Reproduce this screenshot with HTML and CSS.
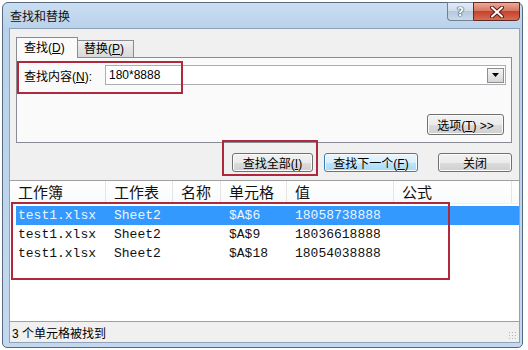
FILE: index.html
```html
<!DOCTYPE html>
<html>

<head>
    <title>查找和替换</title>
    <link rel="stylesheet" href="styles.css">
</head>

<body>
    <div class="window">
        <div class="titlebar">
            <span class="title">查找和替换</span>
            <div class="caption">
                <span class="cap-btn help">?</span>
                <span class="cap-btn close">
                    <svg width="16" height="12" viewBox="0 0 16 12">
                        <path d="M3 1.5 L13 10.5 M13 1.5 L3 10.5" stroke="#5a1a14" stroke-width="4" stroke-linecap="round" />
                        <path d="M3 1.5 L13 10.5 M13 1.5 L3 10.5" stroke="#fff" stroke-width="2" stroke-linecap="round" />
                    </svg>
                </span>
            </div>
        </div>

        <div class="client">
            <div class="upper">
                <div class="tabs">
                    <span class="tab active">查找(<u>D</u>)</span>
                    <span class="tab">替换(<u>P</u>)</span>
                </div>
                <div class="panel">
                    <div class="find-row">
                        <label class="find-label">查找内容(<u>N</u>):</label>
                        <div class="combo">
                            <span class="combo-text">180*8888</span>
                            <span class="combo-btn">
                                <svg width="7" height="4" viewBox="0 0 7 4"><path d="M0 0 H7 L3.5 4 Z" fill="#000" /></svg>
                            </span>
                        </div>
                    </div>
                    <div class="options-row">
                        <button class="btn btn-options">选项(<u>T</u>) &gt;&gt;</button>
                    </div>
                </div>
                <div class="actions">
                    <button class="btn btn-all">查找全部(<u>I</u>)</button>
                    <button class="btn btn-next">查找下一个(<u>F</u>)</button>
                    <button class="btn btn-close">关闭</button>
                </div>
            </div>

            <div class="results">
                <div class="list-head">
                    <span>工作簿</span>
                    <span>工作表</span>
                    <span>名称</span>
                    <span>单元格</span>
                    <span>值</span>
                    <span>公式</span>
                    <span></span>
                </div>
                <div class="list-body">
                    <div class="row selected">
                        <span>test1.xlsx</span><span>Sheet2</span><span></span><span>$A$6</span><span>18058738888</span><span></span>
                    </div>
                    <div class="row">
                        <span>test1.xlsx</span><span>Sheet2</span><span></span><span>$A$9</span><span>18036618888</span><span></span>
                    </div>
                    <div class="row">
                        <span>test1.xlsx</span><span>Sheet2</span><span></span><span>$A$18</span><span>18054038888</span><span></span>
                    </div>
                </div>
            </div>

            <div class="status">
                <span>3 个单元格被找到</span>
                <span class="grip"></span>
            </div>
        </div>

        <!-- red annotation boxes drawn over the dialog -->
        <div class="mark mark-find"></div>
        <div class="mark mark-all"></div>
        <div class="mark mark-rows"></div>
    </div>
</body>

</html>
```

FILE: styles.css
```css
body {
    margin: 0;
    background: #fff;
    font-family: "Liberation Sans", "Noto Sans CJK SC", sans-serif;
    font-size: 12px;
    color: #000;
}

.window {
    position: relative;
    box-sizing: border-box;
    width: 521px;
    height: 346px;
    margin: 2px 0 0 2px;
    padding: 0 2px 4px 6px;
    border: 1px solid #56697f;
    border-radius: 6px 6px 5px 5px;
    background: linear-gradient(#cadef2, #b9d1ea 26px, #bed5ed 60%, #c4d9ef);
    display: flex;
    flex-direction: column;
}

/* title bar */

.titlebar {
    height: 25px;
    flex: none;
    display: flex;
    justify-content: space-between;
    align-items: flex-start;
}

.title {
    padding-left: 1px;
    line-height: 26px;
    font-family: "Noto Sans CJK SC", sans-serif;
    color: #111;
}

.caption {
    display: flex;
    margin-top: -1px;
}

.cap-btn {
    box-sizing: border-box;
    height: 19px;
    display: flex;
    align-items: center;
    justify-content: center;
}

.help {
    width: 26px;
    border: 1px solid #6f8197;
    border-right: none;
    border-radius: 0 0 0 4px;
    background: linear-gradient(#e4ecf5, #cfdcea 45%, #b6c8dc 50%, #cbdaea);
    color: #fff;
    font-family: "DejaVu Sans", sans-serif;
    font-weight: bold;
    font-size: 13px;
    text-shadow: 0 0 1px #2c3e55, 0 0 1px #2c3e55, 0 0 1px #2c3e55;
}

.close {
    width: 47px;
    border: 1px solid #5f2a24;
    border-radius: 0 0 4px 0;
    background: linear-gradient(#eba898, #d87862 45%, #c4432d 50%, #d86c52);
}

/* client area */

.client {
    flex: 1;
    display: flex;
    flex-direction: column;
    border: 1px solid #8ea2b8;
    background: #f0f0f0;
}

.upper {
    padding: 8px 7px 0 6px;
}

.tabs {
    display: flex;
    align-items: flex-end;
    height: 20px;
}

.tab {
    box-sizing: border-box;
    height: 17px;
    padding-left: 6px;
    border: 1px solid #898c95;
    border-bottom: none;
    background: linear-gradient(#f3f3f3, #e3e3e3 50%, #d9d9d9);
    line-height: 16px;
    width: 57px;
    margin-left: -1px;
}

.tab.active {
    position: relative;
    z-index: 1;
    width: 62px;
    height: 21px;
    margin: 0 0 -1px 0;
    padding-left: 7px;
    background: #fafafa;
    line-height: 20px;
}

.panel {
    border: 1px solid #898c95;
    background: #fafafa;
    padding: 7px 5px 7px 7px;
}

.find-row {
    display: flex;
    align-items: center;
}

.find-label {
    flex: 0 0 81px;
}

.combo {
    flex: 1;
    box-sizing: border-box;
    height: 20px;
    display: flex;
    align-items: center;
    justify-content: space-between;
    border: 1px solid #abadb3;
    background: #fff;
}

.combo-text {
    padding-left: 3px;
}

.combo-btn {
    box-sizing: border-box;
    width: 17px;
    height: 15px;
    margin-right: 1px;
    display: flex;
    align-items: center;
    justify-content: center;
    border: 1px solid #8d8e90;
    background: linear-gradient(#f4f4f4, #e6e6e6 50%, #d6d6d6);
}

.options-row {
    display: flex;
    justify-content: flex-end;
    margin-top: 29px;
    padding-right: 2px;
}

.btn {
    box-sizing: border-box;
    padding: 0;
    border: 1px solid #707070;
    border-radius: 3px;
    background: linear-gradient(#f2f2f2, #ebebeb 50%, #dddddd 50%, #cfcfcf);
    box-shadow: inset 0 0 0 1px #fbfbfb;
    font-family: "Liberation Sans", "Noto Sans CJK SC", sans-serif;
    font-size: 12px;
    color: #000;
}

.btn-options {
    width: 77px;
    height: 21px;
}

.actions {
    display: flex;
    justify-content: flex-end;
    margin-top: 10px;
}

.actions .btn {
    height: 19px;
}

.btn-all {
    width: 81px;
}

.btn-next {
    width: 94px;
    margin-left: 11px;
    border-color: #3c7fb1;
    background: linear-gradient(#eaf6fd, #d9f0fc 50%, #bee6fd 50%, #a7d9f5);
}

.btn-close {
    width: 74px;
    margin-left: 20px;
}

/* results list */

.results {
    flex: 1;
    margin-top: 8px;
    border-top: 1px solid #a0a0a0;
    background: #fff;
}

.list-head,
.row {
    display: grid;
    grid-template-columns: 96px 67px 48px 66px 107px 118px 1fr;
}

.list-head {
    height: 22px;
    background: linear-gradient(#fff, #f9fafb);
    border-bottom: 1px solid #f0f0f0;
    font-family: "Noto Sans CJK SC", sans-serif;
    font-size: 15px;
    line-height: 21px;
    color: #111;
}

.list-head span {
    padding-left: 8px;
    border-right: 1px solid #e5e5e5;
}

.list-head span:last-child {
    border-right: none;
}

.list-body {
    padding-top: 2px;
}

.row {
    grid-template-columns: 90px 67px 48px 66px 107px 1fr;
    height: 19px;
    margin-left: 6px;
    font-family: "Liberation Mono", monospace;
    font-size: 13px;
    line-height: 19px;
    color: #111;
}

.row span {
    padding-left: 8px;
    white-space: nowrap;
}

.row span:first-child {
    padding-left: 2px;
}

.row.selected {
    background: #3399ff;
    color: #eaf5ff;
}

/* status bar */

.status {
    height: 20px;
    display: flex;
    align-items: center;
    justify-content: space-between;
    border-top: 1px solid #a0a0a0;
    padding-left: 2px;
}

.grip {
    width: 10px;
    height: 10px;
    align-self: flex-end;
    margin: 0 1px 1px 0;
    background: radial-gradient(circle, #b8b8b8 0.8px, transparent 1px) 0 0 / 3px 3px;
}

/* annotations */

.mark {
    position: absolute;
    box-sizing: border-box;
    border: 2px solid #b0283c;
}

.mark-find {
    left: 14px;
    top: 58px;
    width: 166px;
    height: 33px;
}

.mark-all {
    left: 219px;
    top: 137px;
    width: 96px;
    height: 36px;
}

.mark-rows {
    left: 8px;
    top: 199px;
    width: 439px;
    height: 78px;
}
```
